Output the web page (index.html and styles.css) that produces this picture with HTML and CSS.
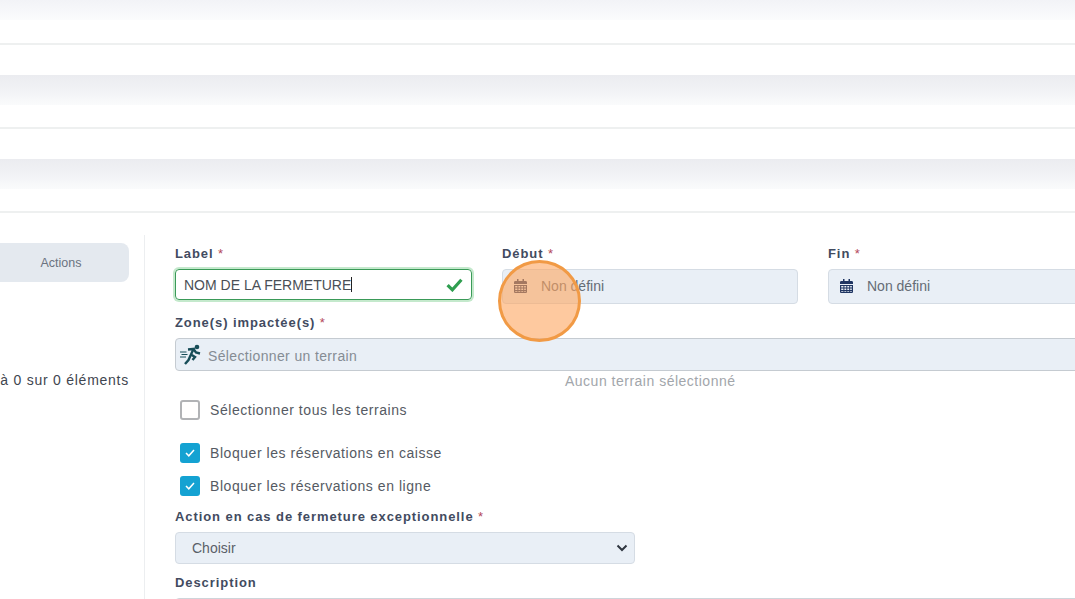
FILE: index.html
```html
<!DOCTYPE html>
<html lang="fr">
<head>
<meta charset="utf-8">
<title>Fermeture</title>
<link rel="stylesheet" href="styles.css">
</head>
<body>
<div class="rows">
  <div class="row row-first"><div class="band band-short"></div><div class="row-body"></div></div>
  <div class="row"><div class="gap"></div><div class="band"></div><div class="row-body"></div></div>
  <div class="row"><div class="gap"></div><div class="band"></div><div class="row-body"></div></div>
</div>
<main class="main">
  <aside class="side">
    <div class="actions">Actions</div>
    <div class="count">à 0 sur 0 éléments</div>
  </aside>
  <form class="form">
    <div class="cols">
      <div class="col">
        <div class="label">Label <span class="req">*</span></div>
        <div class="field field-valid">
          <span class="typed">NOM DE LA FERMETURE</span><span class="caret"></span>
          <svg class="valid-check" width="17" height="15" viewBox="0 0 16 14"><path d="M1.5 7.5 6 12 14.500 2.500" fill="none" stroke="#2f9e50" stroke-width="3"/></svg>
        </div>
      </div>
      <div class="col">
        <div class="label">Début <span class="req">*</span></div>
        <div class="field field-date">
          <svg class="cal" width="13" height="14" viewBox="0 0 13 14"><path fill="#1f3562" d="M3 0h1.500v2H8.500V0H10v2h1.700c.7 0 1.300.6 1.300 1.300V5H0V3.300C0 2.600.6 2 1.300 2H3zM0 6h13v6.700c0 .7-.6 1.300-1.300 1.300H1.300C.6 14 0 13.400 0 12.700zm1.200 1v1.500h2.200V7zm3.200 0v1.500h1.900V7zm2.900 0v1.500h1.900V7zm2.900 0v1.500h1.600V7zM1.200 9.500V11h2.200V9.500zm3.200 0V11h1.900V9.500zm2.900 0V11h1.900V9.500zm2.900 0V11h1.600V9.500zM1.200 12v.8h2.200V12zm3.200 0v.8h1.900V12zm2.900 0v.8h1.900V12zm2.900 0v.8h1.600V12z"/></svg>
          <span>Non défini</span>
        </div>
      </div>
      <div class="col">
        <div class="label">Fin <span class="req">*</span></div>
        <div class="field field-date">
          <svg class="cal" width="13" height="14" viewBox="0 0 13 14"><path fill="#1f3562" d="M3 0h1.500v2H8.500V0H10v2h1.700c.7 0 1.300.6 1.300 1.300V5H0V3.300C0 2.600.6 2 1.300 2H3zM0 6h13v6.700c0 .7-.6 1.300-1.300 1.300H1.300C.6 14 0 13.400 0 12.700zm1.200 1v1.500h2.200V7zm3.200 0v1.500h1.900V7zm2.900 0v1.500h1.900V7zm2.900 0v1.500h1.600V7zM1.200 9.500V11h2.200V9.500zm3.200 0V11h1.900V9.500zm2.900 0V11h1.900V9.500zm2.900 0V11h1.600V9.500zM1.200 12v.8h2.200V12zm3.200 0v.8h1.900V12zm2.900 0v.8h1.900V12zm2.900 0v.8h1.600V12z"/></svg>
          <span>Non défini</span>
        </div>
      </div>
    </div>
    <div class="label label-zone">Zone(s) impactée(s) <span class="req">*</span></div>
    <div class="field-zone">
      <svg class="runner" width="22" height="22" viewBox="0 0 22 22">
        <circle cx="17" cy="3" r="2.300" fill="#174d58"/>
        <path d="M8 5.500 13.500 5 11 10.500 15 13 12.500 16M13.500 5 16 8.500 20 9.500M10.500 11.500 8.500 16 5 20" fill="none" stroke="#174d58" stroke-width="2.400"/>
        <path d="M0 8h6.500M1.500 10.500h6M0 13h6" fill="none" stroke="#174d58" stroke-width="1"/>
      </svg>
      <span class="placeholder">Sélectionner un terrain</span>
    </div>
    <div class="hint">Aucun terrain sélectionné</div>
    <div class="check check-all"><span class="box"></span><span>Sélectionner tous les terrains</span></div>
    <div class="check check-first">
      <span class="box box-on"><svg width="10" height="8" viewBox="0 0 10 8"><path d="M1 4 3.800 6.800 9 1" fill="none" stroke="#fff" stroke-width="1.500"/></svg></span>
      <span>Bloquer les réservations en caisse</span>
    </div>
    <div class="check check-second">
      <span class="box box-on"><svg width="10" height="8" viewBox="0 0 10 8"><path d="M1 4 3.800 6.800 9 1" fill="none" stroke="#fff" stroke-width="1.500"/></svg></span>
      <span>Bloquer les réservations en ligne</span>
    </div>
    <div class="label label-action">Action en cas de fermeture exceptionnelle <span class="req">*</span></div>
    <div class="select">
      <span>Choisir</span>
      <svg width="12" height="8" viewBox="0 0 12 8"><path d="M1.500 1.500 6 6 10.500 1.500" fill="none" stroke="#2f3640" stroke-width="2"/></svg>
    </div>
    <div class="label label-desc">Description</div>
    <div class="textarea"></div>
  </form>
</main>
<div class="pointer"></div>
</body>
</html>
```

FILE: styles.css
```css
* { box-sizing: border-box; }
html, body { height: 100%; }
body {
  margin: 0;
  height: 599px;
  overflow: hidden;
  background: #fff;
  font-family: "Liberation Sans", Arial, sans-serif;
  font-size: 14px;
  color: #4a5160;
  position: relative;
}
.row { display: flex; flex-direction: column; height: 84px; }
.row-first { height: 45px; }
.gap { height: 30px; flex: none; }
.band { height: 30px; flex: none; background: linear-gradient(#ebecf0, #f1f2f5 50%, #fafbfc); }
.band-short { height: 20px; background: linear-gradient(#f2f3f7, #fbfcfd); }
.row-body { flex: 1; border-bottom: 2px solid #eef0f0; }
.main { display: flex; align-items: stretch; height: 386px; padding-top: 22px; overflow: hidden; }
.side {
  width: 145px;
  flex: none;
  border-right: 1px solid #eceef0;
  padding: 8px 15px 0 0;
  display: flex;
  flex-direction: column;
  align-items: flex-end;
}
.actions {
  width: 136px;
  height: 39px;
  background: #e4e9ef;
  border-radius: 8px;
  color: #6b7380;
  font-size: 12.500px;
  display: flex;
  align-items: center;
  justify-content: center;
}
.count { margin-top: 90px; white-space: nowrap; letter-spacing: .75px; color: #3f4650; line-height: 16px; }
.form { width: 950px; flex: none; margin-left: 30px; }
.cols { display: flex; gap: 30px; }
.col { width: 296px; flex: none; }
.col:first-child { width: 297px; }
.label {
  font-weight: 700;
  font-size: 13px;
  line-height: 16px;
  letter-spacing: .92px;
  color: #424b5f;
  white-space: nowrap;
}
.req { color: #b4475a; font-weight: 400; }
.col .label { margin-top: 11px; margin-bottom: 7px; }
.field {
  height: 35px;
  display: flex;
  align-items: center;
  border-radius: 4px;
}
.field-valid {
  height: 31px;
  margin-bottom: 4px;
  border: 1px solid #3a9a58;
  box-shadow: 0 0 0 2px #c4e9cc;
  padding: 0 8px;
  color: #4a4f56;
}
.typed { margin-top: 0; }
.caret { width: 1px; height: 15px; background: #222; }
.valid-check { margin-left: auto; }
.field-date {
  background: #e9eff6;
  border: 1px solid #d5dce4;
  padding: 0 11px 2px;
  gap: 14px;
  color: #656c75;
}
.label-zone { margin-top: 11px; margin-bottom: 7px; }
.field-zone {
  height: 33px;
  width: 950px;
  background: #e9eff6;
  border: 1px solid #c5cbd1;
  border-radius: 4px;
  display: flex;
  align-items: center;
  padding: 0 4px;
  gap: 6px;
}
.placeholder { color: #858c94; letter-spacing: .36px; margin-top: 2px; }
.hint { width: 950px; padding-left: 390px; color: #a2a6ab; line-height: 20px; letter-spacing: .5px; }
.check { display: flex; align-items: center; gap: 10px; margin-left: 5px; height: 20px; letter-spacing: .55px; color: #555a63; }
.check-all { margin-top: 9px; }
.check-first { margin-top: 23px; }
.check-second { margin-top: 13px; }
.box {
  width: 20px;
  height: 20px;
  flex: none;
  border: 2px solid #b1b3b6;
  border-radius: 3px;
  display: flex;
  align-items: center;
  justify-content: center;
}
.box-on { background: #14a2d2; border: none; }
.label-action { margin-top: 13px; margin-bottom: 7px; }
.select {
  width: 460px;
  height: 32px;
  background: #e9eff6;
  border: 1px solid #d5dce4;
  border-radius: 4px;
  display: flex;
  align-items: center;
  justify-content: space-between;
  padding: 0 6px 0 16px;
  color: #5a6068;
}
.label-desc { margin-top: 11px; margin-bottom: 7px; }
.textarea { width: 950px; height: 40px; border: 1px solid #ced4da; border-radius: 4px; }
.pointer {
  position: absolute;
  left: 498px;
  top: 260px;
  width: 83px;
  height: 82px;
  border-radius: 50%;
  border: 3px solid #f19a45;
  background: rgba(253, 165, 95, .6);
}
```
